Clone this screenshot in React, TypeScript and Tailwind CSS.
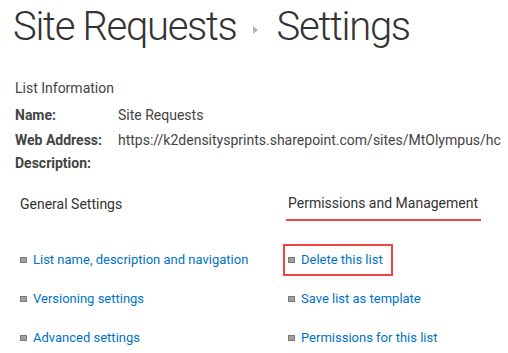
const generalLinks = [
    "List name, description and navigation",
    "Versioning settings",
    "Advanced settings",
]

const permissionLinks = [
    "Delete this list",
    "Save list as template",
    "Permissions for this list",
]

const Bullet = () => (
    <span className="inline-block w-[7px] h-[6px] bg-[#a0a0a0] border border-[#7a7a7a] mr-[6px] shrink-0" />
)

const LinkItem = ({ text, boxed }: { text: string; boxed?: boolean }) => (
    <div className="h-[39px] flex items-center">
        <div
            className={
                boxed
                    ? "flex items-center h-[32px] -ml-[5px] pl-[3px] pr-[8px] border-2 border-[#f04545]"
                    : "flex items-center"
            }
        >
            <Bullet />
            <span className="text-[#0072c6] text-[13px]">{text}</span>
        </div>
    </div>
)

const App = () => {
    return (
        <div
            className="w-[508px] h-[353px] overflow-hidden bg-white text-[#444] pl-[13px]"
            style={{ fontFamily: 'Roboto, "Open Sans", sans-serif' }}
        >
            <div className="flex items-center h-[54px] text-[#333] text-[40px] font-light whitespace-nowrap tracking-[-1.3px]">
                <span>Site Requests</span>
                <svg width="8" height="10" viewBox="0 0 8 10" className="ml-[15px] mr-[17px] mt-[6px]">
                    <path d="M1 1 L6 5 L1 9 Z" fill="#b3b3b3" />
                </svg>
                <span>Settings</span>
            </div>

            <div className="mt-[21px] pl-[2px] text-[14px]">
                <div className="h-[27px] flex items-center text-[#444]">List Information</div>
                <div className="h-[27px] flex items-center">
                    <span className="w-[103px] font-bold">Name:</span>
                    <span>Site Requests</span>
                </div>
                <div className="h-[23px] flex items-center whitespace-nowrap">
                    <span className="w-[103px] shrink-0 font-bold">Web Address:</span>
                    <span>https://k2densitysprints.sharepoint.com/sites/MtOlympus/hc</span>
                </div>
                <div className="h-[23px] flex items-center">
                    <span className="w-[103px] font-bold">Description:</span>
                </div>
            </div>

            <div className="mt-[15px] grid grid-cols-[268px_1fr] pl-[7px]">
                <div>
                    <div className="h-[28px] flex items-center text-[14px] text-[#333]">General Settings</div>
                    <div className="h-[22px]" />
                    {generalLinks.map((l) => (
                        <LinkItem key={l} text={l} />
                    ))}
                </div>
                <div>
                    <div className="h-[28px] flex items-center text-[14px] text-[#333] w-fit">
                        <span className="border-b-2 border-[#f04545] pb-[5px] mt-[6px] -ml-[2px] pl-[2px] pr-[3px]">
                            Permissions and Management
                        </span>
                    </div>
                    <div className="h-[22px]" />
                    {permissionLinks.map((l, i) => (
                        <LinkItem key={l} text={l} boxed={i === 0} />
                    ))}
                </div>
            </div>
        </div>
    )
}

export default App
